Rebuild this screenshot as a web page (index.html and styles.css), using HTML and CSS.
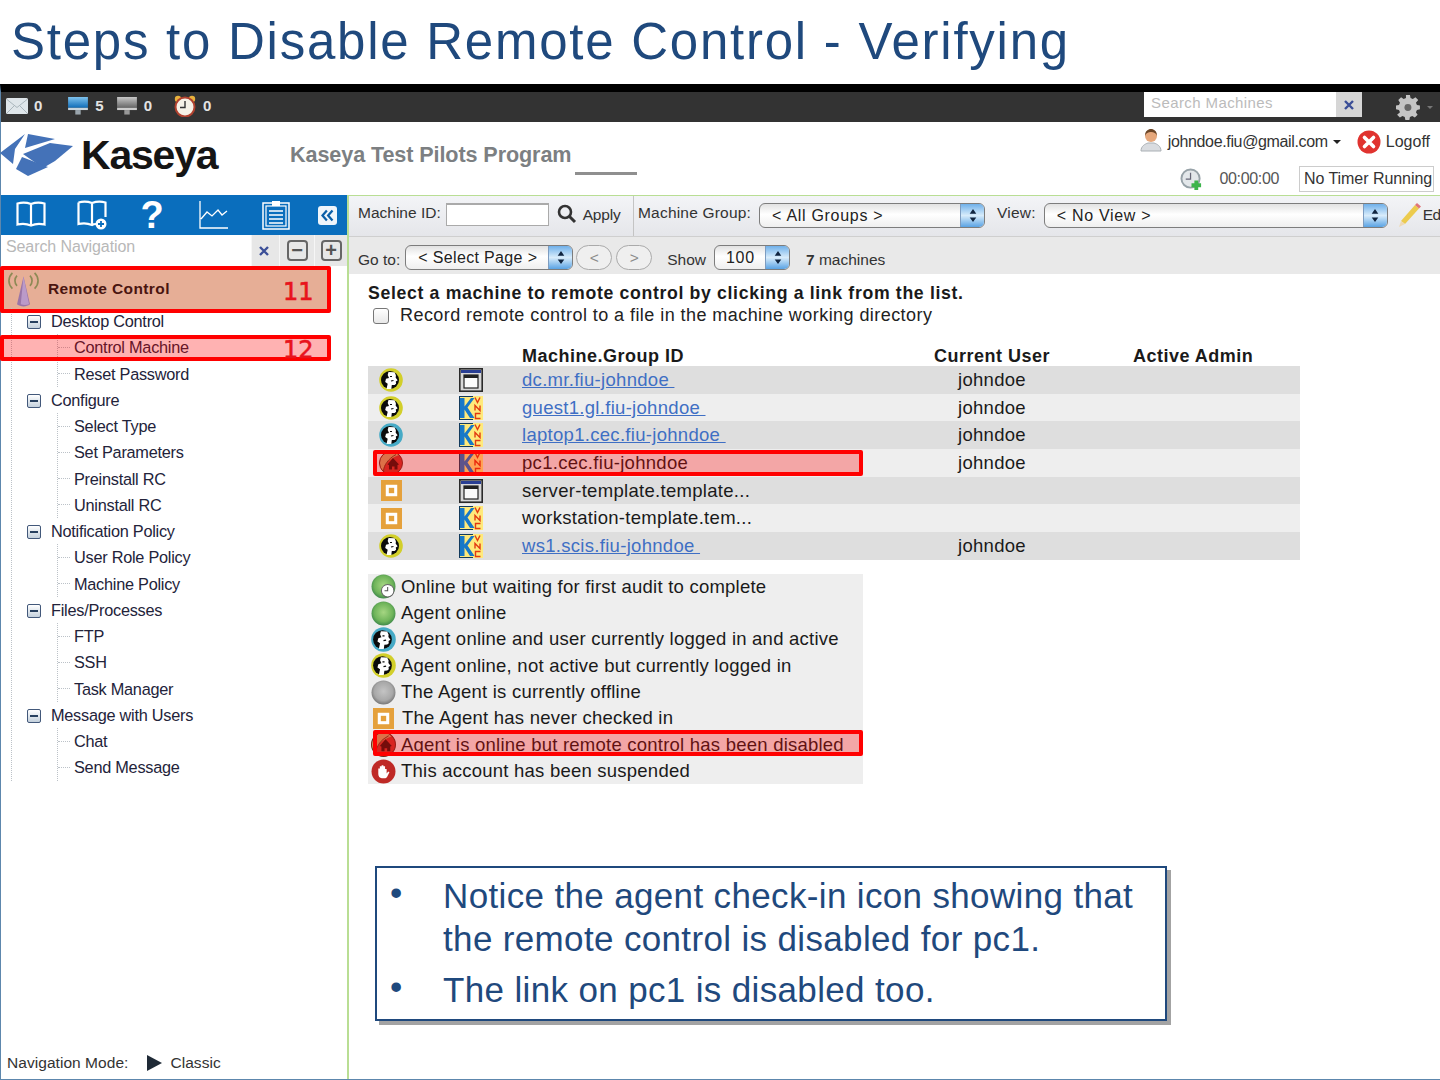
FILE: index.html
```html
<!DOCTYPE html>
<html lang="en">
<head>
<meta charset="utf-8">
<title>Steps to Disable Remote Control - Verifying</title>
<link rel="stylesheet" href="styles.css">
</head>
<body>
<svg class="defs" width="0" height="0" aria-hidden="true">
  <defs>
    <radialGradient id="gGreen" cx="50%" cy="45%" r="55%"><stop offset="0" stop-color="#a5d682"/><stop offset=".7" stop-color="#6fb45a"/><stop offset="1" stop-color="#3f8a4a"/></radialGradient>
    <radialGradient id="gGrey" cx="50%" cy="45%" r="55%"><stop offset="0" stop-color="#c4c4c4"/><stop offset=".7" stop-color="#a8a8a8"/><stop offset="1" stop-color="#777"/></radialGradient>
    <linearGradient id="gScreen" x1="0" y1="0" x2="0" y2="1"><stop offset="0" stop-color="#7fc3ee"/><stop offset="1" stop-color="#0f6cb8"/></linearGradient>
    <linearGradient id="gScreenG" x1="0" y1="0" x2="0" y2="1"><stop offset="0" stop-color="#c8c8c8"/><stop offset="1" stop-color="#666"/></linearGradient>
    <symbol id="i-person" viewBox="0 0 24 24">
      <circle cx="12" cy="12" r="11.800" fill="currentColor"/>
      <circle cx="11" cy="12" r="9" fill="#0b0b0b"/>
      <path d="M9.500 4l6 .2 1.400 3-.2 2.500 2 2.500-1.900 1.200.3 2.300-1.500 1.200-2.800.2-.5 3.900H7.500l1.200-5.300-2.500-1.700.8-3.200 3-.9-1.300-3z" fill="#fff"/>
      <path d="M11 8.500h2M12 13l2.500-.5" stroke="#0b0b0b" stroke-width="1.200"/>
    </symbol>
    <symbol id="i-disabled" viewBox="0 0 24 24">
      <circle cx="12" cy="12" r="11.500" fill="#c8362f"/>
      <path d="M12 .5A11.500 11.500 0 0 0 .5 12c0 3.500 1.500 6.500 4 8.700C4 15 8 8.500 20 4A11.500 11.500 0 0 0 12 .5z" fill="#cfa368"/>
      <path d="M4.500 20C5 14 9 8 17 3.500" fill="none" stroke="#6f3d22"/>
      <path d="M14 7l6 6.500-1.500.5v4.500h-3V15.500h-2.500v3h-3V14l-1.500-.5z" fill="#3a1210"/>
      <circle cx="12" cy="12" r="11.500" fill="none" stroke="#6f2a20"/>
    </symbol>
    <symbol id="i-orange" viewBox="0 0 22 22">
      <rect width="22" height="22" fill="#e5a13c"/><rect x="5" y="5" width="12" height="12" fill="#fff"/><rect x="8.200" y="8.200" width="5.600" height="5.600" fill="#e5a13c"/>
    </symbol>
    <symbol id="i-window" viewBox="0 0 24 24">
      <rect x=".8" y=".8" width="22.400" height="22.400" fill="#d8d8d8" stroke="#2a2a2a" stroke-width="1.600"/>
      <rect x="2" y="2" width="20" height="3" fill="#2a3f94"/>
      <rect x="5" y="7" width="14" height="13" fill="#fbfbfb" stroke="#222" stroke-width="1.200"/>
      <rect x="5" y="7" width="14" height="3" fill="#222"/>
    </symbol>
    <symbol id="i-vnc" viewBox="0 0 24 24">
      <rect width="24" height="24" fill="#ffe97a"/>
      <path d="M0 0h14v1H1v22h13v1H0z" fill="#123a5c"/>
      <path d="M1 2h4.500v8.500L12 2h3.500L8.500 11.500 15.500 22H11L5.500 13.500V22H1z" fill="#1878c8"/>
      <path d="M16 1.500l2.500 5 2.500-5M16 14.500V9.500l5 5V9.500M21.500 17.500h-5v5h5" fill="none" stroke="#e23a12" stroke-width="1.400"/>
    </symbol>
    <symbol id="i-stepper" viewBox="0 0 10 16">
      <path d="M5 1l3.500 5h-7zM5 15l-3.500-5h7z" fill="#10243f"/>
    </symbol>
    <symbol id="i-xsmall" viewBox="0 0 12 12">
      <path d="M2 2l8 8M10 2l-8 8" stroke="#3b4e97" stroke-width="2.400" fill="none"/>
    </symbol>
  </defs>
</svg>

<main class="slide">
  <h1 class="slide-title">Steps to Disable Remote Control - Verifying</h1>

  <div class="app">
    <div class="topbar">
      <div class="counters">
        <span class="counter c-mail">
          <svg class="ic-top" viewBox="0 0 22 16"><rect width="22" height="16" rx="1.500" fill="#dfe6ea"/><path d="M1 1.500l10 8 10-8M1 15l7-7M21 15l-7-7" stroke="#aab6bc" fill="none"/></svg>
          <b>0</b>
        </span>
        <span class="counter c-on">
          <svg class="ic-top" viewBox="0 0 22 20"><rect width="22" height="12" fill="url(#gScreen)"/><rect y="12" width="22" height="2.500" fill="#c9d4dc"/><rect x="8" y="14.500" width="6" height="5" fill="#9aa5ad"/></svg>
          <b>5</b>
        </span>
        <span class="counter c-off">
          <svg class="ic-top" viewBox="0 0 22 20"><rect width="22" height="12" fill="url(#gScreenG)"/><rect y="12" width="22" height="2.500" fill="#ccc"/><rect x="8" y="14.500" width="6" height="5" fill="#999"/></svg>
          <b>0</b>
        </span>
        <span class="counter c-clock">
          <svg class="ic-clock" viewBox="0 0 22 22"><circle cx="4" cy="4" r="3.200" fill="#e9b23c"/><circle cx="18" cy="4" r="3.200" fill="#e9b23c"/><circle cx="11" cy="12" r="9.500" fill="#f5f1e6" stroke="#b0412f" stroke-width="2"/><path d="M11 6v6.500H6" stroke="#333" stroke-width="1.400" fill="none"/></svg>
          <b>0</b>
        </span>
      </div>
      <div class="machine-search">
        <span class="ms-input">Search Machines</span>
        <span class="ms-clear"><svg class="ic-x" viewBox="0 0 12 12"><use href="#i-xsmall"/></svg></span>
      </div>
      <svg class="gear" viewBox="0 0 24 24"><path d="M10 1h4l.6 3 2.300 1 2.600-1.700 2.800 2.800L20 8.700l1 2.300 3 .6v3.800l-3 .6-1 2.300 1.700 2.600-2.800 2.800-2.600-1.700-2.300 1-.6 3h-4l-.6-3-2.300-1-2.600 1.700-2.800-2.800L4 18.300 3 16l-3-.6v-3.800l3-.6 1-2.300-1.700-2.600 2.800-2.800L7.700 5 10 4z" fill="#c4c4c4" transform="scale(.92)"/><circle cx="11" cy="12.500" r="3.200" fill="#666"/></svg>
      <span class="gear-caret"></span>
    </div>

    <header class="header">
      <div class="logo">
        <svg class="logo-mark" viewBox="0 0 75 46">
          <path d="M0 21L25 2 15 17 13 32z" fill="#4472b8"/>
          <path d="M28 2l27 5-30 9z" fill="#4472b8"/>
          <path d="M23 22l27-11 23 3-18 15-12 7z" fill="#4472b8"/>
          <path d="M16 37l6-12 26 10-20 9z" fill="#4472b8"/>
        </svg>
        <span class="logo-word">Kaseya</span>
      </div>
      <div class="program">
        <span class="program-name">Kaseya Test Pilots Program</span>
        <span class="program-rule"></span>
      </div>
      <div class="account">
        <div class="account-row">
          <svg class="ic-user" viewBox="0 0 22 24"><path d="M1 23c0-5 4-7 7-8h6c3 1 7 3 7 8z" fill="#d9dce0" stroke="#aab0b5"/><circle cx="11" cy="8" r="6" fill="#e6a87c"/><path d="M5 8c0-5 3-7 6-7s6 2 6 7c-1-3-3-4-6-4S6 5 5 8z" fill="#6b4526"/></svg>
          <span class="email">johndoe.fiu@gmail.com</span>
          <span class="caret"></span>
          <svg class="ic-logoff" viewBox="0 0 24 24"><circle cx="12" cy="12" r="11.500" fill="#e0332f"/><path d="M7.500 7.500l9 9M16.500 7.500l-9 9" stroke="#fff" stroke-width="3.600" stroke-linecap="round"/></svg>
          <span class="logoff">Logoff</span>
        </div>
        <div class="account-row timer-row">
          <svg class="ic-timer" viewBox="0 0 24 24"><circle cx="11" cy="11" r="9.500" fill="#e3e7ea" stroke="#97a2a8" stroke-width="2"/><path d="M11 5v6.500H6" stroke="#667" stroke-width="1.300" fill="none"/><path d="M15 13h4v3h3v4h-3v3h-4v-3h-3v-4h3z" fill="#3cb44b"/></svg>
          <span class="timer">00:00:00</span>
          <span class="timer-box">No Timer Running</span>
        </div>
      </div>
    </header>

    <div class="workspace">
      <aside class="nav">
        <div class="nav-tools">
          <svg class="tool t-book" viewBox="0 0 30 28"><path d="M1.500 2.500c4-1.200 9-1.200 13.500.5 4.500-1.700 9.500-1.700 13.500-.5v21c-4-1-9-1-13.500 1-4.500-2-9.500-2-13.500-1zM15 3v21" fill="none" stroke="#fff" stroke-width="2.200"/></svg>
          <svg class="tool t-bookplus" viewBox="0 0 30 30"><path d="M1.500 2.500c4-1.200 9-1.200 13.500.5 4.500-1.700 9.500-1.700 13.500-.5V17M19 24c-1.500 0-2.500 0-4 1-4.500-2-9.500-2-13.500-1V2.500M15 3v21" fill="none" stroke="#fff" stroke-width="2.200"/><circle cx="24" cy="24" r="5.500" fill="#fff"/><path d="M24 21v6M21 24h6" stroke="#0a6ebd" stroke-width="1.800"/></svg>
          <span class="t-help">?</span>
          <svg class="tool t-chart" viewBox="0 0 30 30"><path d="M1 1v27h28M2 19l6-7 5 4 6-6 4 5 5-4" fill="none" stroke="#fff" stroke-width="1.300"/></svg>
          <svg class="tool t-clip" viewBox="0 0 28 30"><rect x="1" y="3" width="26" height="26" fill="none" stroke="#fff" stroke-width="1.500"/><rect x="4" y="6" width="20" height="20" fill="none" stroke="#fff" stroke-width="1.200"/><rect x="10" y="1" width="8" height="5" fill="#fff"/><path d="M7 11h14M7 15h14M7 19h14M7 23h14" stroke="#fff" stroke-width="1.400"/></svg>
          <span class="t-collapse"><svg viewBox="0 0 12 12"><path d="M5.500 2L2 6l3.500 4M10 2L6.500 6l3.500 4" fill="none" stroke="#0a5fa8" stroke-width="1.800"/></svg></span>
        </div>
        <div class="nav-search">
          <span class="ns-input">Search Navigation</span>
          <span class="ns-btn ns-clear"><svg class="ic-x" viewBox="0 0 12 12"><use href="#i-xsmall"/></svg></span>
          <span class="ns-btn"><span class="tree-ctl">&minus;</span></span>
          <span class="ns-btn"><span class="tree-ctl">+</span></span>
        </div>
        <div class="module">
          <svg class="ic-tower" viewBox="0 0 40 40"><path d="M20 6L13 36c4 3 10 3 14 0z" fill="#9a75a8"/><path d="M20 6L17 36c3 1 6 1 9 0z" fill="#bb9ac9"/><g fill="none" stroke="#8d8a55" stroke-width="1.800"><path d="M13 5c-3 3-3 8 0 11M8 2C3 7 3 14 8 19M27 5c3 3 3 8 0 11M32 2c5 5 5 12 0 17"/></g></svg>
          <span>Remote Control</span>
        </div>
        <ul class="tree">
          <li class="group"><span class="expander"></span>Desktop Control
            <ul class="leaves">
              <li>Control Machine</li>
              <li>Reset Password</li>
            </ul>
          </li>
          <li class="group"><span class="expander"></span>Configure
            <ul class="leaves">
              <li>Select Type</li>
              <li>Set Parameters</li>
              <li>Preinstall RC</li>
              <li>Uninstall RC</li>
            </ul>
          </li>
          <li class="group"><span class="expander"></span>Notification Policy
            <ul class="leaves">
              <li>User Role Policy</li>
              <li>Machine Policy</li>
            </ul>
          </li>
          <li class="group"><span class="expander"></span>Files/Processes
            <ul class="leaves">
              <li>FTP</li>
              <li>SSH</li>
              <li>Task Manager</li>
            </ul>
          </li>
          <li class="group"><span class="expander"></span>Message with Users
            <ul class="leaves">
              <li>Chat</li>
              <li>Send Message</li>
            </ul>
          </li>
        </ul>
        <div class="nav-mode">
          <span>Navigation Mode:</span>
          <span class="mode-arrow"></span>
          <span>Classic</span>
        </div>
      </aside>

      <section class="content">
        <div class="filters">
          <div class="filter-id">
            <span>Machine ID:</span>
            <span class="text-input"></span>
            <svg class="ic-search" viewBox="0 0 20 20"><circle cx="8" cy="8" r="6" fill="none" stroke="#333" stroke-width="2.600"/><path d="M12.500 12.500L18 18" stroke="#333" stroke-width="3"/></svg>
            <span class="apply">Apply</span>
          </div>
          <div class="filter-group">
            <span>Machine Group:</span>
            <span class="select s-group"><span class="select-label">&lt; All Groups &gt;</span><span class="stepper"><svg viewBox="0 0 10 16"><use href="#i-stepper"/></svg></span></span>
            <span class="view-label">View:</span>
            <span class="select s-view"><span class="select-label">&lt; No View &gt;</span><span class="stepper"><svg viewBox="0 0 10 16"><use href="#i-stepper"/></svg></span></span>
            <svg class="ic-pencil" viewBox="0 0 24 26"><path d="M4 19L18 3l4 3.500L8 22z" fill="#eccb4e"/><path d="M18 3l2-2 4 3.500-2 2z" fill="#e0757a"/><path d="M4 19l-2 6 6-3z" fill="#eed9b5"/></svg>
            <span class="edit">Ed</span>
          </div>
        </div>
        <div class="pager">
          <span>Go to:</span>
          <span class="select s-page"><span class="select-label">&lt; Select Page &gt;</span><span class="stepper"><svg viewBox="0 0 10 16"><use href="#i-stepper"/></svg></span></span>
          <span class="page-btn">&lt;</span>
          <span class="page-btn">&gt;</span>
          <span class="show">Show</span>
          <span class="select s-show"><span class="select-label">100</span><span class="stepper"><svg viewBox="0 0 10 16"><use href="#i-stepper"/></svg></span></span>
          <span class="count"><b>7</b> machines</span>
        </div>
        <div class="body">
          <p class="lead">Select a machine to remote control by clicking a link from the list.</p>
          <div class="record"><span class="checkbox"></span>Record remote control to a file in the machine working directory</div>

          <table class="machines">
            <thead>
              <tr><th class="c-status"></th><th class="c-type"></th><th class="c-id">Machine.Group ID</th><th class="c-user">Current User</th><th class="c-admin">Active Admin</th></tr>
            </thead>
            <tbody>
              <tr><td><svg class="st ring-yellow"><use href="#i-person"/></svg></td><td class="cell-type"><svg class="ty"><use href="#i-window"/></svg></td><td><a href="#">dc.mr.fiu-johndoe&nbsp;</a></td><td class="who">johndoe</td><td></td></tr>
              <tr><td><svg class="st ring-yellow"><use href="#i-person"/></svg></td><td class="cell-type"><svg class="ty"><use href="#i-vnc"/></svg></td><td><a href="#">guest1.gl.fiu-johndoe&nbsp;</a></td><td class="who">johndoe</td><td></td></tr>
              <tr><td><svg class="st ring-blue"><use href="#i-person"/></svg></td><td class="cell-type"><svg class="ty"><use href="#i-vnc"/></svg></td><td><a href="#">laptop1.cec.fiu-johndoe&nbsp;</a></td><td class="who">johndoe</td><td></td></tr>
              <tr><td><svg class="st"><use href="#i-disabled"/></svg></td><td class="cell-type"><svg class="ty"><use href="#i-vnc"/></svg></td><td>pc1.cec.fiu-johndoe</td><td class="who">johndoe</td><td></td></tr>
              <tr><td><svg class="st-sq"><use href="#i-orange"/></svg></td><td class="cell-type"><svg class="ty"><use href="#i-window"/></svg></td><td>server-template.template...</td><td class="who"></td><td></td></tr>
              <tr><td><svg class="st-sq"><use href="#i-orange"/></svg></td><td class="cell-type"><svg class="ty"><use href="#i-vnc"/></svg></td><td>workstation-template.tem...</td><td class="who"></td><td></td></tr>
              <tr><td><svg class="st ring-yellow"><use href="#i-person"/></svg></td><td class="cell-type"><svg class="ty"><use href="#i-vnc"/></svg></td><td><a href="#">ws1.scis.fiu-johndoe&nbsp;</a></td><td class="who">johndoe</td><td></td></tr>
            </tbody>
          </table>

          <ul class="legend">
            <li><svg class="lg" viewBox="0 0 24 24"><circle cx="12" cy="12" r="11.500" fill="url(#gGreen)"/><circle cx="16" cy="16" r="6" fill="#fff" stroke="#666"/><path d="M16 12.500V16h-3" stroke="#555" fill="none"/></svg>Online but waiting for first audit to complete</li>
            <li><svg class="lg" viewBox="0 0 24 24"><circle cx="12" cy="12" r="11.500" fill="url(#gGreen)"/></svg>Agent online</li>
            <li><svg class="lg ring-blue"><use href="#i-person"/></svg>Agent online and user currently logged in and active</li>
            <li><svg class="lg ring-yellow"><use href="#i-person"/></svg>Agent online, not active but currently logged in</li>
            <li><svg class="lg" viewBox="0 0 24 24"><circle cx="12" cy="12" r="11.500" fill="url(#gGrey)"/></svg>The Agent is currently offline</li>
            <li><svg class="lg lg-sq"><use href="#i-orange"/></svg>The Agent has never checked in</li>
            <li><svg class="lg"><use href="#i-disabled"/></svg>Agent is online but remote control has been disabled</li>
            <li><svg class="lg" viewBox="0 0 24 24"><circle cx="12" cy="12" r="11.500" fill="#bf2a26"/><path d="M7 12.500V9h1.500v3V7h1.700v5V6h1.700v6V7h1.600v5.500V9.500h1.500v4.500l1.500-2 1.200.7-2.300 4.600c-.6.800-1.300 1.200-2.300 1.200h-2.800c-2 0-3.300-1.800-3.300-4z" fill="#fff"/></svg>This account has been suspended</li>
          </ul>
        </div>
      </section>
    </div>
  </div>

  <div class="mark mark-module"></div>
  <div class="mark mark-leaf"></div>
  <div class="mark mark-row"></div>
  <div class="mark mark-legend"></div>
  <span class="step step-11">11</span>
  <span class="step step-12">12</span>

  <div class="callout">
    <ul>
      <li>Notice the agent check-in icon showing that the remote control is disabled for pc1.</li>
      <li>The link on pc1 is disabled too.</li>
    </ul>
  </div>
</main>
</body>
</html>
```

FILE: styles.css
```css
* { box-sizing: border-box; }

html, body {
  margin: 0;
  padding: 0;
  background: #fff;
}

.defs { position: absolute; }

.slide {
  position: relative;
  width: 1440px;
  height: 1080px;
  overflow: hidden;
  display: flex;
  flex-direction: column;
  font-family: "Liberation Sans", Arial, sans-serif;
  color: #1c1c1c;
}

.slide-title {
  height: 84px;
  margin: 0;
  padding: 12px 0 0 11px;
  font-size: 51px;
  line-height: 60px;
  font-weight: 400;
  letter-spacing: 1.750px;
  color: #1f497d;
  white-space: nowrap;
}

.app {
  flex: 1;
  display: flex;
  flex-direction: column;
  min-height: 0;
  border-top: 8px solid #000;
  border-left: 1px solid #5d87ad;
  border-bottom: 1px solid #5d87ad;
}

/* Top dark bar */
.topbar {
  height: 30px;
  flex: none;
  display: flex;
  align-items: center;
  background: #333;
  padding-left: 5px;
}

.counters {
  display: flex;
  align-items: center;
  flex: 1;
  padding-bottom: 3px;
}

.counter {
  display: flex;
  align-items: center;
  gap: 6px;
  color: #e3e3e3;
  font-size: 15px;
}

.c-on { margin-left: 25px; }
.c-off { margin-left: 12px; }
.c-clock { margin-left: 22px; gap: 7px; }

.ic-top { width: 22px; height: 18px; }
.ic-clock { width: 22px; height: 22px; }

.machine-search {
  display: flex;
  width: 218px;
  height: 25px;
  margin: -5px 34px 0 0;
  background: #fff;
}

.ms-input {
  flex: 1;
  padding: 2px 0 0 7px;
  font-size: 15px;
  letter-spacing: .4px;
  color: #bbb;
}

.ms-clear {
  width: 26px;
  background: #d6d6d6;
  display: flex;
  align-items: center;
  justify-content: center;
}

.ic-x { width: 12px; height: 12px; }

.gear { width: 26px; height: 26px; margin-right: 5px; }

.gear-caret {
  width: 0;
  height: 0;
  margin-right: 7px;
  border-top: 3px solid #777;
  border-left: 3px solid transparent;
  border-right: 3px solid transparent;
}

/* Header */
.header {
  height: 73px;
  flex: none;
  display: flex;
  background: #fff;
}

.logo {
  width: 289px;
  display: flex;
  align-items: center;
  gap: 6px;
  flex: none;
  padding-bottom: 7px;
}

.logo-mark { width: 75px; height: 46px; flex: none; margin-left: -1px; }

.logo-word {
  font-size: 41px;
  font-weight: 700;
  letter-spacing: -1.200px;
  color: #151515;
}

.program {
  display: flex;
  flex: 1;
  align-items: flex-start;
  padding-top: 20px;
}

.program-name {
  font-size: 21.600px;
  font-weight: 700;
  color: #7c7f82;
  letter-spacing: -.1px;
}

.program-rule {
  width: 62px;
  height: 3px;
  margin: 30px 0 0 4px;
  background: #8f8f8f;
}

.account {
  width: 320px;
  display: flex;
  flex-direction: column;
  align-items: flex-end;
  padding-top: 1px;
  font-size: 16px;
  letter-spacing: -.35px;
  color: #333;
}

.account-row {
  display: flex;
  align-items: center;
  height: 40px;
  padding: 0 10px 2px 0;
}

.timer-row {
  height: 32px;
  margin-top: 1px;
  padding: 0 6px 0 0;
}

.ic-user { width: 22px; height: 24px; margin-right: 6px; margin-top: -4px; }
.ic-logoff { width: 24px; height: 24px; margin: 0 5px 0 16px; }
.logoff { letter-spacing: 0; }

.caret {
  margin-left: 5px;
  border-top: 4px solid #222;
  border-left: 4px solid transparent;
  border-right: 4px solid transparent;
}

.ic-timer { width: 23px; height: 23px; margin-right: 17px; }
.timer { color: #555; margin-right: 20px; }

.timer-box {
  width: 135px;
  height: 26px;
  padding-left: 4px;
  border: 1px solid #ccc;
  line-height: 24px;
  letter-spacing: -.05px;
  white-space: nowrap;
  overflow: hidden;
}

/* Main area */
.workspace {
  flex: 1;
  display: flex;
  min-height: 0;
}

.nav {
  width: 348px;
  flex: none;
  display: flex;
  flex-direction: column;
  border-right: 2px solid #b9de94;
  background: #fff;
}

.nav-tools {
  height: 40px;
  display: flex;
  align-items: center;
  padding-left: 15px;
  background: #0a6ebd;
  color: #fff;
}

.tool { flex: none; }
.t-book { width: 30px; height: 28px; }
.t-bookplus { width: 30px; height: 30px; margin-left: 31px; }

.t-help {
  width: 24px;
  margin-left: 33px;
  font-size: 38px;
  line-height: 40px;
  font-weight: 700;
  text-align: center;
}

.t-chart { width: 30px; height: 30px; margin-left: 35px; }
.t-clip { width: 28px; height: 30px; margin-left: 33px; }

.t-collapse {
  width: 19px;
  height: 19px;
  margin-left: 28px;
  padding: 2px;
  border-radius: 3px;
  background: #eef5fb;
  display: flex;
}

.nav-search {
  height: 31px;
  display: flex;
  background: #e7e7e7;
}

.ns-input {
  width: 251px;
  padding: 3px 0 0 5px;
  font-size: 16px;
  letter-spacing: -.1px;
  color: #b8b8b8;
  background: #fff;
}

.ns-btn {
  width: 33px;
  display: flex;
  align-items: center;
  justify-content: center;
  border-left: 1px solid #f6f6f6;
}

.ns-clear { width: 25px; margin-right: 3px; }
.ns-clear + .ns-btn { width: 35px; }

.tree-ctl {
  width: 21px;
  height: 21px;
  display: block;
  border: 2px solid #666;
  border-radius: 4px;
  font-size: 20px;
  line-height: 16px;
  text-align: center;
  font-weight: 700;
  color: #555;
}

.module {
  height: 44px;
  margin: 3px 18px 0 0;
  display: flex;
  align-items: center;
  gap: 6px;
  padding: 0 0 5px 4px;
  font-size: 15.500px;
  font-weight: 700;
  letter-spacing: .4px;
  color: #4a1510;
  background: #e6ae96;
}

.ic-tower { width: 37px; height: 37px; margin-top: 2px; flex: none; }

.tree {
  list-style: none;
  margin: -5px 0 0 10px;
  padding: 0;
  font-size: 16.300px;
  letter-spacing: -.25px;
  line-height: 26.250px;
  color: #23233a;
  border-left: 1px dotted #bcc2c8;
}

.group { padding-left: 15px; }

.expander {
  display: inline-block;
  position: relative;
  width: 14px;
  height: 14px;
  margin-right: 10px;
  vertical-align: -2px;
  border: 1px solid #42587a;
  border-radius: 2px;
  background: linear-gradient(#fff, #c3d0dc);
}

.expander::after {
  content: "";
  position: absolute;
  left: 2px;
  right: 2px;
  top: 5px;
  height: 2px;
  background: #27405f;
}

.leaves {
  list-style: none;
  margin: 0 0 0 30px;
  padding: 0;
  border-left: 1px dotted #bcc2c8;
}

.leaves li {
  display: flex;
  align-items: center;
  gap: 4px;
}

.leaves li::before {
  content: "";
  width: 12px;
  border-top: 1px dotted #bcc2c8;
}

.nav-mode {
  margin-top: auto;
  height: 32px;
  display: flex;
  align-items: center;
  padding-left: 6px;
  font-size: 15.500px;
  letter-spacing: .05px;
  color: #333;
}

.mode-arrow {
  margin: 0 8px 0 19px;
  border-left: 15px solid #1f2a36;
  border-top: 8px solid transparent;
  border-bottom: 8px solid transparent;
}

/* Content */
.content {
  flex: 1;
  min-width: 0;
  overflow: hidden;
  display: flex;
  flex-direction: column;
  border-top: 1px solid #b9de94;
}

.filters {
  height: 41px;
  display: flex;
  flex: none;
  font-size: 15.500px;
  color: #333;
  background: linear-gradient(#f3f4f7, #e5e6ea);
  border-bottom: 1px solid #cfcfcf;
}

.filter-id {
  width: 285px;
  flex: none;
  display: flex;
  align-items: center;
  padding: 0 0 6px 9px;
  border-right: 1px solid #c4c4c4;
}

.text-input {
  width: 103px;
  height: 23px;
  margin: 2px 8px 0 5px;
  background: #fff;
  border: 1px solid #aaa;
  border-top-width: 2px;
}

.ic-search { width: 20px; height: 20px; margin-top: 1px; }
.apply { margin: 3px 0 0 6px; letter-spacing: -.2px; }

.filter-group {
  display: flex;
  align-items: center;
  padding: 0 0 6px 4px;
  letter-spacing: .2px;
  white-space: nowrap;
}

.select {
  display: flex;
  align-items: stretch;
  height: 25px;
  flex: none;
  border: 1px solid #7d7d7d;
  border-radius: 6px;
  background: linear-gradient(#e2e2e2, #fff 45%, #efefef);
  font-size: 16px;
  letter-spacing: .7px;
  color: #222;
  overflow: hidden;
}

.select-label {
  flex: 1;
  padding-left: 12px;
  line-height: 23px;
}

.stepper {
  width: 24px;
  display: flex;
  align-items: center;
  justify-content: center;
  background: linear-gradient(#6fb0ea, #d8ecfb 50%, #5aa3e4);
  border-left: 1px solid #7d9cc0;
}

.stepper svg { width: 10px; height: 15px; }

.s-group { width: 226px; margin: 4px 12px 0 8px; }
.s-view { width: 344px; margin: 4px 9px 0 8px; }

.ic-pencil { width: 24px; height: 26px; flex: none; margin-top: 3px; }
.edit { margin: 4px 0 0 2px; letter-spacing: -.6px; }

.pager {
  height: 37px;
  flex: none;
  display: flex;
  align-items: center;
  padding: 4px 0 0 9px;
  background: #e9e9e9;
  font-size: 15.500px;
  color: #333;
}

.pager > span:first-child { margin-top: 4px; }

.s-page { width: 168px; margin: 0 3px 0 5px; letter-spacing: .35px; }
.s-show { width: 76px; margin-right: 16px; }
.s-show .select-label { padding-left: 11px; }

.page-btn {
  width: 36px;
  height: 25px;
  margin-right: 4px;
  border: 1px solid #aaa;
  border-radius: 13px;
  background: #efefef;
  color: #8a8a8a;
  text-align: center;
  line-height: 23px;
}

.show { margin: 5px 8px 0 11px; }
.count { margin-top: 5px; }

.body {
  padding: 8px 0 0 19px;
}

.lead {
  margin: 0;
  font-size: 17.700px;
  line-height: 22px;
  font-weight: 700;
  letter-spacing: .65px;
  color: #1a1a1a;
}

.record {
  display: flex;
  align-items: center;
  height: 22px;
  font-size: 18px;
  letter-spacing: .44px;
  color: #222;
}

.checkbox {
  width: 16px;
  height: 16px;
  margin: 2px 11px 0 5px;
  border: 1px solid #777;
  border-radius: 3px;
  background: linear-gradient(#fff, #e8e8e8);
}

.machines {
  width: 932px;
  margin-top: 15px;
  border-collapse: collapse;
  table-layout: fixed;
  font-size: 18.500px;
  letter-spacing: .3px;
  color: #1a1a1a;
}

.machines th {
  height: 25px;
  padding: 0;
  text-align: left;
  font-size: 18px;
  line-height: 20px;
  font-weight: 700;
  letter-spacing: .5px;
  vertical-align: bottom;
}

.c-status { width: 78px; }
.c-type { width: 76px; }
.c-id { width: 412px; }
.c-user { width: 199px; }

.machines td {
  height: 27.700px;
  padding: 0;
  vertical-align: middle;
  white-space: nowrap;
}

.machines tbody tr:nth-child(odd) { background: #dedede; }
.machines tbody tr:nth-child(even) { background: #eeeeee; }

.machines a { color: #3f6fc4; }

.machines .who { padding-left: 24px; }

.st, .st-sq {
  display: block;
  width: 24px;
  height: 24px;
  margin-left: 11px;
}

.st-sq { width: 21px; height: 21px; margin-left: 13px; }

.ty { display: block; width: 24px; height: 24px; margin-left: 13px; }

.ring-yellow { color: #d2cf2a; }
.ring-blue { color: #46aac6; }

.legend {
  width: 495px;
  margin: 14px 0 0;
  padding: 0 0 0 3px;
  list-style: none;
  background: #eeeeee;
  font-size: 18.500px;
  line-height: 26.300px;
  letter-spacing: .23px;
  color: #1a1a1a;
  white-space: nowrap;
}

.legend li {
  display: flex;
  align-items: center;
  gap: 5px;
}

.lg { width: 25px; height: 25px; flex: none; }

.lg-sq { width: 21px; height: 21px; margin: 0 3px 0 2px; }

/* Annotations over the screenshot */
.mark {
  position: absolute;
  border: 4px solid #f00;
  border-radius: 2px;
  background: rgba(255, 0, 0, .3);
}

.mark-module { left: 0; top: 266px; width: 331px; height: 47px; background: none; }
.mark-leaf { left: 0; top: 335px; width: 331px; height: 26px; }
.mark-row { left: 373px; top: 450px; width: 490px; height: 26px; }
.mark-legend { left: 373px; top: 730px; width: 490px; height: 26px; }

.step {
  position: absolute;
  font-family: "DejaVu Sans", sans-serif;
  font-size: 24px;
  line-height: 26px;
  -webkit-text-stroke: .6px #e8141c;
  color: #e8141c;
}

.step-11 { left: 283px; top: 279px; }
.step-12 { left: 283px; top: 337px; }

.callout {
  position: absolute;
  left: 375px;
  top: 866px;
  width: 792px;
  height: 155px;
  padding: 6px 18px 0 14px;
  background: #fff;
  border: 2px solid #1f497d;
  box-shadow: 4px 4px 0 #a3a3a3;
  font-size: 35px;
  line-height: 43px;
  letter-spacing: .35px;
  color: #1f497d;
}

.callout ul {
  margin: 0;
  padding: 0;
  list-style: none;
}

.callout li {
  position: relative;
  padding-left: 52px;
  margin-bottom: 8px;
}

.callout li::before {
  content: "•";
  position: absolute;
  left: -1px;
  top: -3px;
}
```
